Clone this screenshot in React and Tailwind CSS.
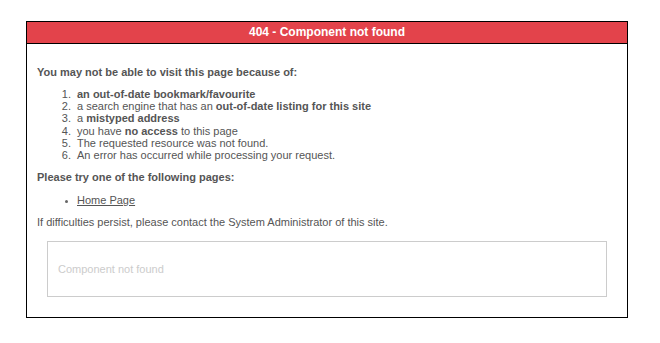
import React from 'react';

const reasons = [
  [<b key="a">an out-of-date bookmark/favourite</b>],
  ['a search engine that has an ', <b key="b">out-of-date listing for this site</b>],
  ['a ', <b key="c">mistyped address</b>],
  ['you have ', <b key="d">no access</b>, ' to this page'],
  ['The requested resource was not found.'],
  ['An error has occurred while processing your request.'],
];

const App = () => {
  return (
    <div className="min-h-[343px] bg-white pt-[21px] pl-[26px] text-[#555] font-['Liberation_Sans',Arial,sans-serif] text-[11px]">
      <div className="w-[602px] border border-black">
        <div className="h-[22px] bg-[#e3434b] border-b border-black text-center text-white font-bold text-[12px] leading-[21px]">
          404 - Component not found
        </div>
        <div className="px-[10px] pt-[22px] pb-[20px]">
          <p className="font-bold leading-[13px]">You may not be able to visit this page because of:</p>
          <ol className="mt-[9px] leading-[12.2px]">
            {reasons.map((r, i) => (
              <li key={i} className="flex">
                <span className="w-[34px] shrink-0 text-right">{i + 1}.</span>
                <span className="ml-[6px]">{r}</span>
              </li>
            ))}
          </ol>
          <p className="font-bold leading-[13px] mt-[10px]">Please try one of the following pages:</p>
          <ul className="mt-[10px] leading-[13px]">
            <li className="flex items-center">
              <span className="ml-[28px] w-[3px] h-[3px] rounded-full bg-[#666] mt-[2px]"></span>
              <a href="#" className="ml-[9px] underline text-[#555]">Home Page</a>
            </li>
          </ul>
          <p className="leading-[13px] mt-[9px]">If difficulties persist, please contact the System Administrator of this site.</p>
          <div className="mx-[10px] mt-[12px] h-[56px] border border-[#ccc] px-[10px] flex items-center">
            <span className="text-[#ccc]">Component not found</span>
          </div>
        </div>
      </div>
    </div>
  );
};

export default App;
